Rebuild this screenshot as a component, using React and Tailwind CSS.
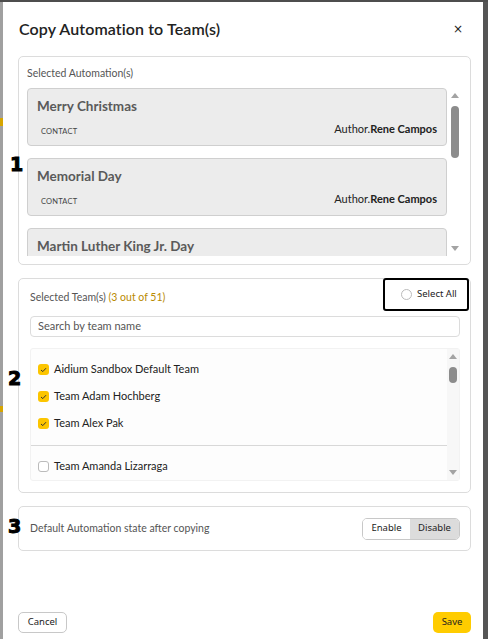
import React from "react";

const cards = [
  { title: "Merry Christmas", tag: "CONTACT", author: "Rene Campos" },
  { title: "Memorial Day", tag: "CONTACT", author: "Rene Campos" },
  { title: "Martin Luther King Jr. Day", tag: "CONTACT", author: "Rene Campos" },
];

const teams = [
  { name: "Aidium Sandbox Default Team", on: true },
  { name: "Team Adam Hochberg", on: true },
  { name: "Team Alex Pak", on: true },
];

function Marker({ n, className }) {
  return (
    <span
      className={`absolute text-[19px] font-black leading-none text-black ${className}`}
      style={{ fontFamily: "'DejaVu Sans', sans-serif", WebkitTextStroke: "1px black" }}
    >
      {n}
    </span>
  );
}

function Scrollbar({ thumbTop, thumbH }) {
  return (
    <div className="relative w-[12px] shrink-0 flex flex-col items-center justify-between py-[5px]">
      <svg width="8" height="5" viewBox="0 0 8 5"><path d="M0 5 L4 0 L8 5Z" fill="#a3a3a3" /></svg>
      <div className="absolute left-[2px] w-[8px] rounded-full bg-[#8c8c8c]" style={{ top: thumbTop, height: thumbH }} />
      <svg width="8" height="5" viewBox="0 0 8 5"><path d="M0 0 L4 5 L8 0Z" fill="#a3a3a3" /></svg>
    </div>
  );
}

function Check({ on }) {
  if (!on)
    return <span className="w-[11px] h-[11px] rounded-[3px] border border-[#bbb] bg-white shrink-0" />;
  return (
    <span className="w-[11px] h-[11px] rounded-[3px] bg-[#fcc500] shrink-0 flex items-center justify-center">
      <svg width="7" height="6" viewBox="0 0 7 6"><path d="M1 3 L2.8 4.6 L6 1.2" stroke="#333" strokeWidth="1" fill="none" /></svg>
    </span>
  );
}

export default function App() {
  return (
    <div className="w-[488px] h-[639px] flex flex-col bg-[#4d4d4d] overflow-hidden" style={{ fontFamily: "Lato, 'Open Sans', sans-serif" }}>
      <div className="h-[2px] shrink-0" />
      <div className="flex flex-1 min-h-0">
        <div className="w-[3px] bg-[#a0a0a0] flex flex-col">
          <div className="h-[116px]" />
          <div className="h-[8px] bg-[#d6a500]" />
          <div className="h-[280px]" />
          <div className="h-[6px] bg-[#d6a500]" />
        </div>
        <div className="relative flex-1 bg-white flex flex-col pl-[15px] pr-[12px]">
          <div className="flex items-center justify-between h-[54px] pl-[1px] pr-[8px]">
            <span className="text-[16px] font-semibold text-[#222] tracking-[0.1px]">Copy Automation to Team(s)</span>
            <span className="text-[12px] text-[#222]" style={{ fontFamily: "'DejaVu Sans', sans-serif" }}>×</span>
          </div>

          {/* Section 1 */}
          <div className="h-[209px] border border-[#dcdcdc] rounded-[5px] pl-[8px] pr-[9px] pt-[9px] flex flex-col">
            <div className="text-[10.5px] text-[#555] mb-[8px] leading-[14px]">Selected Automation(s)</div>
            <div className="flex h-[168px] gap-[2px]">
              <div className="flex-1 overflow-hidden flex flex-col gap-[12px]">
                {cards.map((c) => (
                  <div key={c.title} className="shrink-0 h-[58px] bg-[#ececec] border border-[#cfcfcf] rounded-[4px] px-[9px] pt-[9px]">
                    <div className="text-[13.5px] font-bold text-[#5a5a5a] leading-[17px]">{c.title}</div>
                    <div className="flex items-end justify-between mt-[6px]">
                      <span className="ml-[4px] text-[7.5px] text-[#444] tracking-[0.2px]">{c.tag}</span>
                      <span className="text-[11px] text-[#222]">Author.<b>{c.author}</b></span>
                    </div>
                  </div>
                ))}
              </div>
              <Scrollbar thumbTop={18} thumbH={52} />
            </div>
          </div>

          {/* Section 2 */}
          <div className="mt-[13px] h-[215px] border border-[#dcdcdc] rounded-[5px] relative pl-[11px] pr-[10px] flex flex-col">
            <div className="h-[37px] flex items-center justify-between">
              <span className="text-[10.5px] text-[#555]">Selected Team(s) <span className="text-[#b98a00]">(3 out of 51)</span></span>
            </div>
            <div className="absolute right-[1px] top-[-1px] w-[86px] h-[33px] border-2 border-black rounded-[3px] flex items-center gap-[5px] pl-[16px]" style={{ fontFamily: "'Noto Sans', sans-serif" }}>
              <span className="w-[11px] h-[11px] rounded-full border border-[#bbb]" />
              <span className="text-[9.5px] text-[#222]">Select All</span>
            </div>
            <div className="h-[21px] border border-[#dcdcdc] rounded-[4px] flex items-center px-[7px] text-[11px] text-[#555]">Search by team name</div>
            <div className="mt-[11px] h-[133px] flex border border-[#f2f2f2] rounded-[3px] bg-[#fdfdfd]">
              <div className="flex-1 flex flex-col">
                <div className="flex flex-col pt-[12px] pb-[13px] gap-[10px] pl-[7px]">
                  {teams.map((t) => (
                    <div key={t.name} className="flex items-center gap-[5px] h-[17px]">
                      <Check on={t.on} />
                      <span className="text-[11px] text-[#222]">{t.name}</span>
                    </div>
                  ))}
                </div>
                <div className="border-t border-[#d8d8d8]" />
                <div className="flex items-center gap-[5px] pl-[7px] h-[44px] pt-[7px]">
                  <Check on={false} />
                  <span className="text-[11px] text-[#222]">Team Amanda Lizarraga</span>
                </div>
              </div>
              <div className="bg-[#f7f7f7] flex">
                <Scrollbar thumbTop={18} thumbH={16} />
              </div>
            </div>
          </div>

          {/* Section 3 */}
          <div className="mt-[13px] h-[45px] border border-[#dcdcdc] rounded-[5px] flex items-center justify-between pl-[11px] pr-[10px]">
            <span className="text-[10.5px] text-[#555]">Default Automation state after copying</span>
            <div className="flex h-[22px] border border-[#c8c8c8] rounded-[5px] overflow-hidden text-[9.5px] text-[#222]" style={{ fontFamily: "'Noto Sans', sans-serif" }}>
              <span className="w-[47px] flex items-center justify-center bg-white">Enable</span>
              <span className="w-[49px] flex items-center justify-center bg-[#dcdcdc]">Disable</span>
            </div>
          </div>

          <div className="flex-1" />
          <div className="flex items-center justify-between mb-[6px]" style={{ fontFamily: "'Noto Sans', sans-serif" }}>
            <span className="h-[21px] w-[49px] border border-[#c8c8c8] rounded-[5px] flex items-center justify-center text-[9.5px] text-[#222]">Cancel</span>
            <span className="h-[21px] w-[38px] bg-[#ffcc00] rounded-[5px] flex items-center justify-center text-[9.5px] text-[#222]">Save</span>
          </div>

          <Marker n="1" className="left-[7px] top-[153px]" />
          <Marker n="2" className="left-[5px] top-[367px]" />
          <Marker n="3" className="left-[5px] top-[515px]" />
        </div>
        <div className="w-[5px] bg-[#555]" />
      </div>
    </div>
  );
}
